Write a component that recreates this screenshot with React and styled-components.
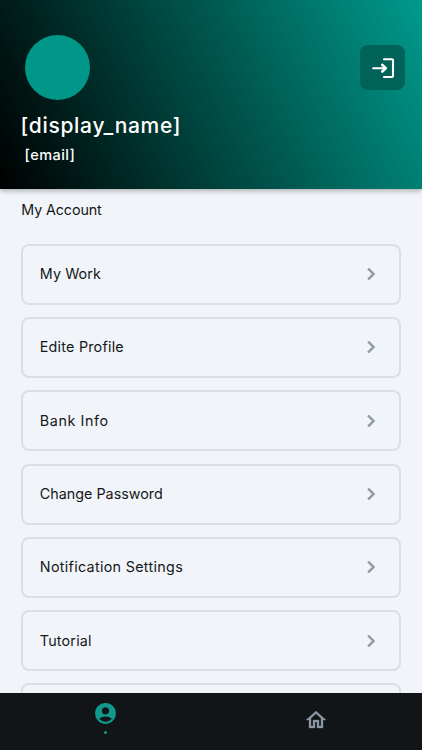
import React from "react"
import styled, { createGlobalStyle } from "styled-components"
import { MdAccountCircle, MdChevronRight, MdOutlineHome } from "react-icons/md"

const GlobalStyle = createGlobalStyle`
  * {
    box-sizing: border-box;
  }

  body {
    margin: 0;
    background: #f1f4f8;
    color: #14181b;
    font-family: "Inter", "Liberation Sans", sans-serif;
    overflow: hidden;
  }
`

const Page = styled.div`
  display: flex;
  flex-direction: column;
  height: 100vh;
`

const Header = styled.header`
  flex: 0 0 188.5px;
  display: flex;
  justify-content: space-between;
  align-items: flex-start;
  padding: 35px 17px 0 20.5px;
  background: linear-gradient(65deg, #000 0%, #009a8c 100%);
  box-shadow: 0 2px 5px rgba(0, 0, 0, 0.28);
  color: #fff;
`

const Avatar = styled.div`
  width: 65px;
  height: 65px;
  margin-left: 4px;
  border-radius: 50%;
  background: #009688;
`

const Name = styled.h1`
  margin: 12px 0 0;
  font-size: 21px;
  font-weight: 500;
  line-height: 28px;
  letter-spacing: ${({ $spacing }) => $spacing}px;
`

const Email = styled.p`
  margin: 6px 0 0 4px;
  font-size: 14.5px;
  font-weight: 500;
  line-height: 18px;
  letter-spacing: ${({ $spacing }) => $spacing}px;
`

const LogoutButton = styled.button`
  display: flex;
  align-items: center;
  justify-content: center;
  width: 45px;
  height: 45px;
  margin-top: 10px;
  padding: 0;
  border: 0;
  border-radius: 8px;
  background: #006259;
  color: #fff;
`

const Content = styled.main`
  flex: 1;
  min-height: 0;
  overflow: hidden;
  padding: 11.5px 21.3px 0;
`

const SectionTitle = styled.h2`
  margin: 0 0 23.7px;
  font-size: 14.3px;
  font-weight: 400;
  line-height: 20px;
  letter-spacing: ${({ $spacing }) => $spacing}px;
`

const Menu = styled.div`
  display: flex;
  flex-direction: column;
  gap: 12.3px;
`

const MenuItem = styled.div`
  flex: 0 0 61px;
  display: flex;
  align-items: center;
  justify-content: space-between;
  padding: 0 15.5px 0 16.5px;
  border: 2px solid #dbdfe5;
  border-radius: 8px;

  svg {
    color: #929ca6;
  }

  svg path:last-child {
    stroke: currentColor;
    stroke-width: 0.6;
  }
`

const Label = styled.span`
  font-size: 14.3px;
  line-height: 20px;
  letter-spacing: ${({ $spacing }) => $spacing}px;
`

const NavBar = styled.nav`
  flex: 0 0 57.5px;
  display: flex;
  background: #111518;
`

const Tab = styled.div`
  flex: 1;
  display: flex;
  flex-direction: column;
  align-items: center;
  padding-top: ${({ $active }) => ($active ? 8 : 15)}px;
  padding-right: ${({ $active }) => ($active ? 0 : 1)}px;
  color: ${({ $active }) => ($active ? "#10998c" : "#8b97a2")};
`

const HomeIcon = styled(MdOutlineHome)`
  path:last-child {
    stroke: currentColor;
    stroke-width: 0.3;
  }
`

const Dot = styled.span`
  width: 3px;
  height: 3px;
  margin-top: 5.5px;
  border-radius: 50%;
  background: currentColor;
`

const items = [
  { text: "My Work", spacing: 0.1 },
  { text: "Edite Profile", spacing: 0.23 },
  { text: "Bank Info", spacing: 0.6 },
  { text: "Change Password", spacing: 0.02 },
  { text: "Notification Settings", spacing: 0.32 },
  { text: "Tutorial", spacing: 0.2 },
  { text: "", spacing: 0 },
]

const LogoutIcon = () => (
  <svg
    width="24"
    height="24"
    viewBox="0 0 24 24"
    fill="none"
    stroke="currentColor"
    strokeWidth="2.1"
    strokeLinecap="round"
    strokeLinejoin="round"
  >
    <path d="M13 3.2h8a1 1 0 0 1 1 1v15.8a1 1 0 0 1-1 1H13" />
    <path d="M2.2 12.2h12.5" />
    <path d="M11.3 8.9l3.4 3.3-3.4 3.3" strokeWidth="2.6" />
  </svg>
)

export default function App() {
  return (
    <Page>
      <GlobalStyle />
      <Header>
        <div>
          <Avatar />
          <Name $spacing={0.7}>[display_name]</Name>
          <Email $spacing={0.45}>[email]</Email>
        </div>
        <LogoutButton aria-label="Log out">
          <LogoutIcon />
        </LogoutButton>
      </Header>
      <Content>
        <SectionTitle $spacing={-0.1}>My Account</SectionTitle>
        <Menu>
          {items.map(({ text, spacing }, i) => (
            <MenuItem key={i}>
              <Label $spacing={spacing}>{text}</Label>
              {text && <MdChevronRight size={24} />}
            </MenuItem>
          ))}
        </Menu>
      </Content>
      <NavBar>
        <Tab $active>
          <MdAccountCircle size={25} />
          <Dot />
        </Tab>
        <Tab>
          <HomeIcon size={24} />
        </Tab>
      </NavBar>
    </Page>
  )
}
